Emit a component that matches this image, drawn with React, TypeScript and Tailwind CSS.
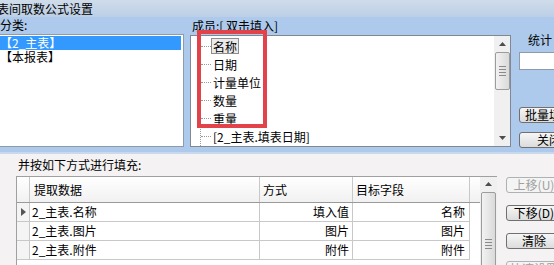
const rows = [
  { src: "2_主表.名称", mode: "填入值", target: "名称" },
  { src: "2_主表.图片", mode: "图片", target: "图片" },
  { src: "2_主表.附件", mode: "附件", target: "附件" },
];

const members = ["名称", "日期", "计量单位", "数量", "重量", "[2_主表.填表日期]"];

const UpArrow = () => (
  <svg width="7" height="4" viewBox="0 0 7 4">
    <path d="M0 4 L3.5 0 L7 4 Z" fill="#4d4d4d" />
  </svg>
);

const DownArrow = () => (
  <svg width="7" height="4" viewBox="0 0 7 4">
    <path d="M0 0 L3.5 4 L7 0 Z" fill="#4d4d4d" />
  </svg>
);

const Grip = () => (
  <div className="flex flex-col gap-[2px] items-center">
    <div className="w-[7px] h-px bg-[#8a8a8a]" />
    <div className="w-[7px] h-px bg-[#8a8a8a]" />
    <div className="w-[7px] h-px bg-[#8a8a8a]" />
    <div className="w-[7px] h-px bg-[#8a8a8a]" />
  </div>
);

const Btn = ({
  label,
  w,
  disabled = false,
}: {
  label: string;
  w: string;
  disabled?: boolean;
}) => (
  <div
    className={`${w} h-[16px] shrink-0 flex items-center justify-center rounded-[3px] border leading-[14px] ${
      disabled
        ? "border-[#adb2b5] bg-[#f4f4f4] text-[#a0a0a0]"
        : "border-[#707070] bg-gradient-to-b from-[#f6f6f6] to-[#dcdcdc] text-black"
    }`}
  >
    {label}
  </div>
);

export default function App() {
  return (
    <div className="w-[554px] h-[265px] overflow-hidden bg-[#f4f2f2] text-[12px] text-black font-['Noto_Sans_CJK_SC',sans-serif]">
      {/* 제목줄 */}
      <div className="h-[17px] bg-gradient-to-b from-[#cfdcea] to-[#bccfe6] leading-[17px] whitespace-nowrap">
        <span className="-ml-[3px] inline-block">表间取数公式设置</span>
      </div>

      {/* 위쪽 파란 영역 */}
      <div className="h-[137px] bg-[#adcaec] flex border-b-2 border-[#c9d8ea] whitespace-nowrap overflow-hidden">
        {/* 분류 */}
        <div className="w-[184px] shrink-0 flex flex-col">
          <div className="h-[17px] leading-[16px]">分类:</div>
          <div className="h-[113px] bg-white border-y border-r border-[#8e9bab] pt-[1px]">
            <div className="h-[14px] leading-[14px] bg-[#3399ff] text-white mr-[2px]">【2_主表】</div>
            <div className="h-[14px] leading-[14px]">【本报表】</div>
          </div>
        </div>

        {/* 성원 */}
        <div className="ml-[6px] w-[321px] shrink-0 flex flex-col relative">
          <div className="h-[18px] leading-[17px] pl-[2px]">成员:[ 双击填入]</div>
          <div className="h-[112px] bg-white border border-[#828790] flex">
            <div className="flex-1 relative pt-[1px]">
              <div className="absolute left-[9px] top-0 bottom-0 border-l border-dotted border-[#9a9a9a]" />
              {members.map((m, i) => (
                <div key={m} className="h-[18px] flex items-center pl-[10px]">
                  <div className="w-[10px] border-t border-dotted border-[#9a9a9a]" />
                  <span
                    className={`h-[16px] leading-[15px] px-px ${
                      i === 0 ? "bg-[#ebebeb] border border-[#8d8d8d]" : "border border-transparent"
                    }`}
                  >
                    {m}
                  </span>
                </div>
              ))}
            </div>
            <div className="w-[16px] shrink-0 bg-[#f0f0f0] flex flex-col items-center">
              <div className="h-[16px] flex items-center justify-center">
                <UpArrow />
              </div>
              <div className="w-[15px] h-[38px] rounded-[2px] border border-[#9c9c9c] bg-gradient-to-r from-[#f2f2f2] to-[#dadada] flex items-center justify-center">
                <Grip />
              </div>
              <div className="flex-1" />
              <div className="h-[16px] flex items-center justify-center">
                <DownArrow />
              </div>
            </div>
          </div>
          {/* 빨간 표시 상자 */}
          <div className="absolute left-[7px] top-[13px] w-[70px] h-[98px] border-[4px] border-[#e2434a]" />
        </div>

        {/* 통계 */}
        <div className="ml-[8px] w-[60px] shrink-0 flex flex-col">
          <div className="pt-[16px] h-[30px] leading-[14px] pl-[9px]">统计</div>
          <div className="mt-[5px] h-[18px] w-[60px] bg-white border border-[#8e9bab]" />
          <div className="mt-[37px]">
            <Btn label="批量填充" w="w-[60px]" />
          </div>
          <div className="mt-[9px]">
            <Btn label="关闭" w="w-[60px]" />
          </div>
        </div>
      </div>

      {/* 아래 영역 */}
      <div className="whitespace-nowrap">
        <div className="h-[20px] pl-[18px] pt-[3px] leading-[16px]">并按如下方式进行填充:</div>
        <div className="flex ml-[16px] mt-[2px]">
          <div className="w-[464px] shrink-0 h-[100px] bg-white border-l border-t border-[#a0a0a0]">
            {/* 머리줄 */}
            <div className="flex h-[26px] bg-gradient-to-b from-white to-[#f1f1f1] border-b border-[#9a9a9a]">
              <div className="w-[13px] shrink-0 border-r border-[#c8c8c8]" />
              <div className="w-[230px] shrink-0 border-r border-[#c8c8c8] pl-[4px] leading-[25px]">提取数据</div>
              <div className="w-[93px] shrink-0 border-r border-[#c8c8c8] pl-[3px] leading-[25px]">方式</div>
              <div className="w-[117px] shrink-0 border-r border-[#c8c8c8] pl-[3px] leading-[25px]">目标字段</div>
            </div>
            {rows.map((r, i) => (
              <div key={r.src} className="flex h-[19px] leading-[18px]">
                <div className="w-[13px] shrink-0 border-r border-b border-[#c8c8c8] bg-[#f4f4f4] flex items-center justify-center">
                  {i === 0 && (
                    <svg width="5" height="8" viewBox="0 0 5 8">
                      <path d="M0 0 L5 4 L0 8 Z" fill="#555" />
                    </svg>
                  )}
                </div>
                <div className="w-[230px] shrink-0 border-r border-b border-[#c8c8c8] pl-[2px]">{r.src}</div>
                <div className="w-[93px] shrink-0 border-r border-b border-[#c8c8c8] pr-[3px] text-right">{r.mode}</div>
                <div className="w-[117px] shrink-0 border-r border-b border-[#c8c8c8] pr-[4px] text-right">{r.target}</div>
              </div>
            ))}
          </div>
          {/* 표 스크롤바 */}
          <div className="w-[17px] shrink-0 h-[100px] bg-[#f0f0f0] flex flex-col items-center border-t border-[#a0a0a0]">
            <div className="h-[17px] flex items-center justify-center">
              <UpArrow />
            </div>
            <div className="w-[15px] h-[104px] mt-[1px] rounded-[2px] border border-[#9c9c9c] bg-gradient-to-r from-[#f2f2f2] to-[#dadada] flex flex-col items-center">
              <div className="mt-[46px]">
                <Grip />
              </div>
            </div>
          </div>
          {/* 오른쪽 단추 */}
          <div className="ml-[9px] shrink-0 flex flex-col gap-[12px] pt-px">
            <Btn label="上移(U)" w="w-[56px]" disabled />
            <Btn label="下移(D)" w="w-[56px]" />
            <Btn label="清除" w="w-[56px]" />
            <Btn label="快速设置" w="w-[56px]" disabled />
          </div>
        </div>
      </div>
    </div>
  );
}
